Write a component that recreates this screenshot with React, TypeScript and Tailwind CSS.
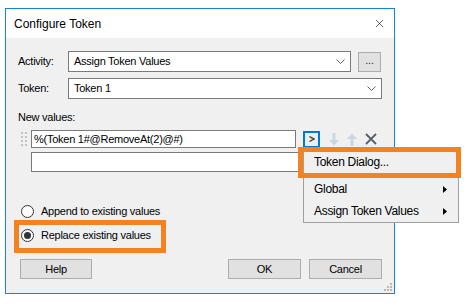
import { X } from "lucide-react";

function Chevron() {
  return (
    <svg width="9" height="5" viewBox="0 0 9 5" className="shrink-0">
      <path d="M0.5 0.5 L4.5 4.5 L8.5 0.5" fill="none" stroke="#606060" strokeWidth="1" />
    </svg>
  );
}

function Combo({ text, width }: { text: string; width: string }) {
  return (
    <div className={`${width} h-[21px] bg-white border border-[#7a7a7a] flex items-center pl-[5px] pr-[5px] justify-between`}>
      <span>{text}</span>
      <Chevron />
    </div>
  );
}

function Grip() {
  const dots = [0, 4, 8, 12];
  return (
    <svg width="6" height="14" viewBox="0 0 6 14" className="ml-[3px] shrink-0">
      {dots.map((y) => (
        <g key={y} fill="#c4c4c4">
          <rect x="0" y={y} width="2" height="2" />
          <rect x="4" y={y} width="2" height="2" />
        </g>
      ))}
    </svg>
  );
}

function Radio({ checked, label }: { checked?: boolean; label: string }) {
  return (
    <div className="h-[16px] flex items-center">
      <div className="ml-[3px] w-[13px] h-[13px] rounded-full border border-[#333] bg-white flex items-center justify-center">
        {checked && <div className="w-[7px] h-[7px] rounded-full bg-[#333]" />}
      </div>
      <span className="ml-[7px]">{label}</span>
    </div>
  );
}

function Button({ label, className }: { label: string; className?: string }) {
  return (
    <div
      className={`h-[20px] bg-[#e1e1e1] border border-[#adadad] flex items-center justify-center ${className ?? ""}`}
    >
      {label}
    </div>
  );
}

export default function App() {
  return (
    <div className="relative w-[474px] h-[305px] bg-white overflow-hidden font-['Liberation_Sans',Arial,sans-serif] text-black">
      <div className="ml-[5px] mt-[8px] w-[390px] h-[286px] border border-[#1883d7] flex flex-col">
        {/* Title bar */}
        <div className="h-[29px] bg-white flex items-center justify-between pl-[8px] pr-[8px] text-[12px]">
          <span>Configure Token</span>
          <X className="w-[13px] h-[13px]" strokeWidth={1.2} color="#111" />
        </div>

        {/* Body */}
        <div className="relative flex-1 bg-[#f0f0f0] px-[12px] pt-[13px] flex flex-col text-[11px] tracking-[-0.25px]">
          <div className="h-[21px] flex items-center">
            <span className="w-[50px]">Activity:</span>
            <Combo text="Assign Token Values" width="w-[283px]" />
            <div className="ml-[7px] w-[23px] h-[20px] bg-[#e1e1e1] border border-[#adadad] flex items-center justify-center pb-[3px] text-[#3a2a4a]">
              ...
            </div>
          </div>

          <div className="mt-[6px] h-[21px] flex items-center">
            <span className="w-[50px]">Token:</span>
            <Combo text="Token 1" width="w-[314px] shrink-0" />
          </div>

          <div className="mt-[10px] h-[16px] flex items-center">New values:</div>

          <div className="mt-[5px] h-[18px] flex items-center">
            <Grip />
            <div className="ml-[4px] w-[265px] h-[18px] bg-white border border-[#7a7a7a] flex items-center pl-[2px]">
              %(Token 1#@RemoveAt(2)@#)
            </div>
            <div className="ml-[7px] w-[17px] h-[17px] border-2 border-[#0078d7] bg-[#e5f1fb] flex items-center justify-center">
              <svg width="6" height="6" viewBox="0 0 6 6">
                <path d="M0.5 0.5 L5 3 L0.5 5.5" fill="none" stroke="#3b2d1a" strokeWidth="1.2" />
                <path d="M0.5 1.5 L3.5 3" fill="none" stroke="#e0902a" strokeWidth="1" />
              </svg>
            </div>
            <svg width="12" height="13" viewBox="0 0 12 13" className="ml-[8px]">
              <path d="M4.5 0 H7.5 V7 H11 L6 12.5 L1 7 H4.5 Z" fill="#c9d6e3" />
            </svg>
            <svg width="12" height="13" viewBox="0 0 12 13" className="ml-[6px]">
              <path d="M4.5 13 H7.5 V6 H11 L6 0.5 L1 6 H4.5 Z" fill="#c9d6e3" />
            </svg>
            <svg width="12" height="12" viewBox="0 0 12 12" className="ml-[7px]">
              <path d="M1 1 L11 11 M11 1 L1 11" stroke="#5a5f66" strokeWidth="1.8" />
            </svg>
          </div>

          <div className="mt-[4px] h-[20px] flex items-center">
            <div className="ml-[13px] w-[289px] h-[20px] bg-white border border-[#7a7a7a]" />
          </div>

          <div className="mt-[31px]">
            <Radio label="Append to existing values" />
          </div>
          <div className="mt-[8px]">
            <Radio checked label="Replace existing values" />
          </div>

          <div className="mt-[16px] flex items-center">
            <Button label="Help" className="ml-[2px] w-[72px]" />
            <div className="flex-1" />
            <Button label="OK" className="w-[73px]" />
            <Button label="Cancel" className="ml-[8px] w-[73px]" />
          </div>

          {/* size grip */}
          <svg width="8" height="8" viewBox="0 0 8 8" className="absolute right-[2px] bottom-[2px]">
            <g fill="#b8b8b8">
              <rect x="6" y="0" width="2" height="2" />
              <rect x="3" y="3" width="2" height="2" />
              <rect x="6" y="3" width="2" height="2" />
              <rect x="0" y="6" width="2" height="2" />
              <rect x="3" y="6" width="2" height="2" />
              <rect x="6" y="6" width="2" height="2" />
            </g>
          </svg>
        </div>
      </div>

      {/* Context menu */}
      <div className="absolute left-[303px] top-[149px] w-[156px] bg-[#f0f0f0] border border-[#a0a0a0] text-[12px] tracking-[-0.3px] flex flex-col">
        <div className="h-[24px] flex items-center pl-[10px]">Token Dialog...</div>
        <div className="mt-[4px] h-[22px] flex items-center justify-between pl-[10px] pr-[11px]">
          <span>Global</span>
          <svg width="4" height="7" viewBox="0 0 4 7">
            <path d="M0 0 L4 3.5 L0 7 Z" fill="#000" />
          </svg>
        </div>
        <div className="h-[22px] flex items-center justify-between pl-[10px] pr-[11px]">
          <span>Assign Token Values</span>
          <svg width="4" height="7" viewBox="0 0 4 7">
            <path d="M0 0 L4 3.5 L0 7 Z" fill="#000" />
          </svg>
        </div>
      </div>

      {/* Annotation highlights */}
      <div className="absolute left-[298px] top-[147px] w-[163px] h-[31px] border-[5px] border-[#f58220]" />
      <div className="absolute left-[14px] top-[220px] w-[152px] h-[33px] border-[5px] border-[#f58220]" />
    </div>
  );
}
